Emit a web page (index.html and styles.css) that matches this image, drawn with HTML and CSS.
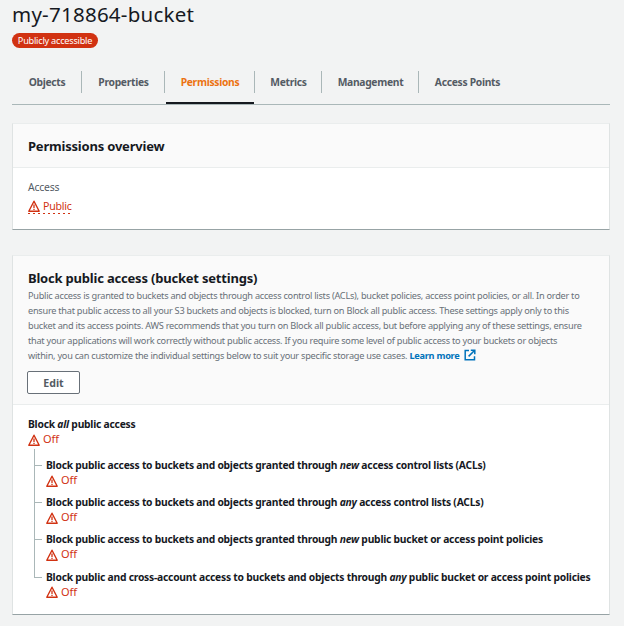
FILE: index.html
```html
<!DOCTYPE html>
<html lang="en">
<head>
<meta charset="utf-8">
<title>my-718864-bucket</title>
<link rel="stylesheet" href="styles.css">
</head>
<body>
<svg class="defs" width="0" height="0">
  <symbol id="warn" viewBox="0 0 12 12"><path d="M6 1.2 11.2 11.2H.8Z" fill="none" stroke="currentColor" stroke-width="1.4" stroke-linejoin="round"/><path d="M6 4.5V8M6 8.7V10" stroke="currentColor" stroke-width="1.3"/></symbol>
</svg>
<main class="page">
  <h1 class="title">my-718864-bucket</h1>
  <span class="badge">Publicly accessible</span>
  <nav class="tabs">
    <a class="tab tab-objects"><span>Objects</span></a>
    <a class="tab tab-properties"><span>Properties</span></a>
    <a class="tab tab-permissions active"><span>Permissions</span></a>
    <a class="tab tab-metrics"><span>Metrics</span></a>
    <a class="tab tab-management"><span>Management</span></a>
    <a class="tab tab-points"><span>Access Points</span></a>
  </nav>

  <section class="card overview">
    <header class="card-head"><h2>Permissions overview</h2></header>
    <div class="card-body">
      <div class="label">Access</div>
      <div class="status public"><svg class="warn"><use href="#warn"/></svg><span>Public</span></div>
    </div>
  </section>

  <section class="card block">
    <header class="card-head">
      <h2>Block public access (bucket settings)</h2>
      <p class="desc">Public access is granted to buckets and objects through access control lists (ACLs), bucket policies, access point policies, or all. In order to<br>
      ensure that public access to all your S3 buckets and objects is blocked, turn on Block all public access. These settings apply only to this<br>
      bucket and its access points. AWS recommends that you turn on Block all public access, but before applying any of these settings, ensure<br>
      that your applications will work correctly without public access. If you require some level of public access to your buckets or objects<br>
      within, you can customize the individual settings below to suit your specific storage use cases. <a class="more">Learn more<svg class="ext" viewBox="0 0 12 12"><path d="M5 1.5H1.2V10.8H10.5V7.3M6.8 1.2H10.8V5.2M10.5 1.5 4.6 7.4" fill="none" stroke="currentColor" stroke-width="1.5"/></svg></a></p>
      <button class="edit">Edit</button>
    </header>
    <div class="card-body">
      <div class="name">Block <em>all</em> public access</div>
      <div class="status"><svg class="warn"><use href="#warn"/></svg><span>Off</span></div>
      <ul class="tree">
        <li><div class="name">Block public access to buckets and objects granted through <em>new</em> access control lists (ACLs)</div>
          <div class="status"><svg class="warn"><use href="#warn"/></svg><span>Off</span></div></li>
        <li><div class="name">Block public access to buckets and objects granted through <em>any</em> access control lists (ACLs)</div>
          <div class="status"><svg class="warn"><use href="#warn"/></svg><span>Off</span></div></li>
        <li><div class="name">Block public access to buckets and objects granted through <em>new</em> public bucket or access point policies</div>
          <div class="status"><svg class="warn"><use href="#warn"/></svg><span>Off</span></div></li>
        <li><div class="name">Block public and cross-account access to buckets and objects through <em>any</em> public bucket or access point policies</div>
          <div class="status"><svg class="warn"><use href="#warn"/></svg><span>Off</span></div></li>
      </ul>
    </div>
  </section>
</main>
</body>
</html>
```
FILE: styles.css
```css
* { box-sizing: border-box; }
body { margin: 0; background: #f2f3f3; color: #16191f; font-family: "Noto Sans", "Open Sans", sans-serif; white-space: nowrap; }
h1, h2, p, ul { margin: 0; padding: 0; }
.defs { position: absolute; }
.page { width: 624px; height: 626px; padding: 1px 14px 0 12px; overflow: hidden; }
.title { height: 32px; font-size: 20.5px; font-weight: 400; line-height: 26px; letter-spacing: .25px; }
.badge { display: flex; align-items: center; justify-content: center; width: 86px; height: 15px; border-radius: 8px; background: #d13212; color: #fff; font-size: 9.2px; letter-spacing: -.25px; }

.tabs { display: flex; height: 57px; padding-top: 23px; border-bottom: 1px solid #aab7b8; }
.tab { position: relative; height: 22px; padding-left: 1px; border-right: 1px solid #aab7b8; text-align: center; color: #545b64; font-size: 10.3px; font-weight: 700; line-height: 22px; letter-spacing: -.3px; }
.tab-objects { width: 70px; }
.tab-properties { width: 83px; }
.tab-permissions { width: 90px; }
.tab-metrics { width: 67px; }
.tab-management { width: 97px; }
.tab-points { width: 96px; border-right: 0; }
.tab.active { color: #ec7211; }
.tab.active::after { content: ""; position: absolute; left: 1px; right: 0; top: 31px; height: 2px; background: #16191f; }

.card { width: 598px; background: #fff; border: 1px solid #dfe3e3; border-top-color: #eaeded; border-bottom-color: #97a3a5; }
.card-head { padding: 0 15px; background: #fafafa; border-bottom: 1px solid #eaeded; }
.card-body { padding: 0 15px; }
h2 { font-size: 13px; font-weight: 700; line-height: 18px; letter-spacing: -.2px; }
.overview { height: 107px; margin-top: 18px; }
.overview .card-head { height: 44px; padding-top: 13px; }
.overview .card-body { padding-top: 11px; }
.label { color: #545b64; font-size: 10.4px; line-height: 16px; letter-spacing: -.2px; }
.status { display: flex; align-items: center; gap: 3px; height: 15px; color: #d13212; font-size: 11px; line-height: 15px; letter-spacing: -.1px; }
.status span { position: relative; top: -1px; }
.warn { width: 12px; height: 12px; }
.public { width: 44px; height: 17px; margin-top: 2px; padding-top: 1px; background: repeating-linear-gradient(90deg, #d13212 0 2px, transparent 2px 5px) bottom / 100% 1px no-repeat; font-size: 10.6px; letter-spacing: -.25px; }
.public span { top: 0; }

.block { height: 360px; margin-top: 25px; }
.block .card-head { height: 149px; padding-top: 13px; }
.desc { margin-top: 1px; color: #687078; font-size: 9.2px; line-height: 15px; letter-spacing: -.26px; }
.more { color: #0073bb; font-weight: 700; }
.ext { width: 12px; height: 12px; margin-left: 4px; vertical-align: -2px; }
.edit { display: block; width: 53px; height: 23px; margin: 8px 0 0 -1px; padding: 0; background: #fff; border: 1px solid #687078; border-radius: 2px; color: #545b64; font: 700 10.6px/20px "Noto Sans", sans-serif; }
.block .card-body { padding-top: 11px; }
.name { font-size: 10.3px; font-weight: 700; line-height: 16px; letter-spacing: -.232px; }
.tree { margin: 2px 0 0 6px; list-style: none; }
.tree li { position: relative; height: 37.4px; padding-left: 12px; }
.tree li:first-child { height: 45px; padding-top: 8px; }
.tree li::before { content: ""; position: absolute; left: 0; top: 0; bottom: 0; border-left: 1px solid #aab7b8; }
.tree li::after { content: ""; position: absolute; left: 0; top: 8px; width: 8px; border-top: 1px solid #aab7b8; }
.tree li:first-child::after { top: 16px; }
.tree li:last-child::before { bottom: auto; height: 9px; }
```
